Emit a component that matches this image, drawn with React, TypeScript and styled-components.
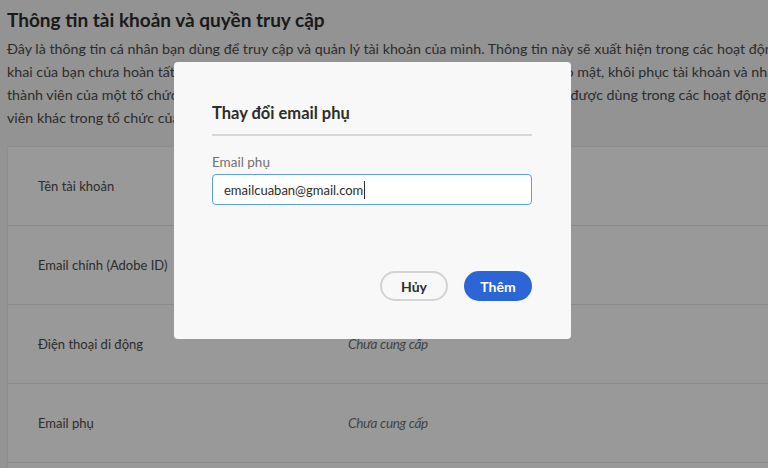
import React from "react";
import styled, { createGlobalStyle } from "styled-components";

const GlobalStyle = createGlobalStyle`
  html, body {
    margin: 0;
    padding: 0;
    background: #f5f5f5;
    overflow: hidden;
    height: 100%;
  }
  body {
    font-family: Lato, "Noto Sans", sans-serif;
    color: #4b4b4b;
  }
  * { box-sizing: border-box; }
`;

const Page = styled.div`
  width: 1100px;
  padding: 6px 0 0 7px;
`;

const Heading = styled.h1`
  margin: 0;
  font-size: 19px;
  line-height: 28px;
  font-weight: 700;
  color: #2c2c2c;
`;

const Intro = styled.div`
  margin-top: 3px;
  font-size: 14.25px;
  line-height: 23px;
  color: #4b4b4b;
`;

const IntroLine = styled.div`
  white-space: nowrap;
`;

const Card = styled.div`
  margin-top: 17px;
  background: #ffffff;
  border: 1px solid #ececec;
  border-right: none;
`;

const Row = styled.div`
  display: grid;
  grid-template-columns: 310px 1fr;
  align-items: center;
  height: 79px;
  padding-left: 30px;
  border-bottom: 1px solid #e6e6e6;
`;

const Label = styled.div`
  font-size: 13px;
  color: #4b4b4b;
`;

const Value = styled.div<{ $empty?: boolean }>`
  font-size: 13.5px;
  color: ${(p) => (p.$empty ? "#707070" : "#4b4b4b")};
  font-style: ${(p) => (p.$empty ? "italic" : "normal")};
  letter-spacing: ${(p) => (p.$empty ? "-0.3px" : "0")};
`;

const Overlay = styled.div`
  position: fixed;
  inset: 0;
  background: rgba(0, 0, 0, 0.4);
  display: flex;
  align-items: flex-start;
  padding: 62px 0 0 174px;
`;

const Dialog = styled.div`
  width: 397px;
  height: 277px;
  background: #f8f8f8;
  border-radius: 4px;
  padding: 40px 39px 38px 38px;
  display: flex;
  flex-direction: column;
`;

const DialogTitle = styled.h2`
  margin: 0;
  font-size: 16.5px;
  line-height: 22px;
  font-weight: 700;
  color: #2c2c2c;
  padding-bottom: 10px;
  border-bottom: 2px solid #d7d7d7;
`;

const FieldLabel = styled.label`
  display: block;
  margin-top: 17px;
  font-size: 13.5px;
  line-height: 18px;
  color: #707070;
`;

const InputBox = styled.div`
  margin-top: 3px;
  height: 31px;
  border: 1px solid #5d9ef3;
  border-radius: 4px;
  background: #ffffff;
  display: flex;
  align-items: center;
  padding-left: 11px;
  font-size: 13px;
  color: #2c2c2c;
`;

const Caret = styled.span`
  display: inline-block;
  width: 1px;
  height: 18px;
  background: #2c2c2c;
  margin-left: 1px;
`;

const Actions = styled.div`
  margin-top: auto;
  display: flex;
  justify-content: flex-end;
  gap: 16px;
`;

const Button = styled.button<{ $primary?: boolean }>`
  height: 30px;
  min-width: 68px;
  padding: 0 14px;
  border-radius: 16px;
  font-family: inherit;
  font-size: 14px;
  font-weight: 700;
  cursor: pointer;
  border: 2px solid ${(p) => (p.$primary ? "#2c65d6" : "#d3d3d3")};
  background: ${(p) => (p.$primary ? "#2c65d6" : "transparent")};
  color: ${(p) => (p.$primary ? "#ffffff" : "#2c2c2c")};
`;

const rows = [
  { label: "Tên tài khoản", value: "", empty: false },
  { label: "Email chính (Adobe ID)", value: "", empty: false },
  { label: "Điện thoại di động", value: "Chưa cung cấp", empty: true },
  { label: "Email phụ", value: "Chưa cung cấp", empty: true },
  { label: "Ngày sinh", value: "Chưa cung cấp", empty: true },
];

export default function App() {
  return (
    <>
      <GlobalStyle />
      <Page>
        <Heading>Thông tin tài khoản và quyền truy cập</Heading>
        <Intro>
          <IntroLine>
            Đây là thông tin cá nhân bạn dùng để truy cập và quản lý tài khoản của mình. Thông tin này sẽ xuất hiện trong các hoạt động công
          </IntroLine>
          <IntroLine>
            khai của bạn chưa hoàn tất. Chúng tôi sẽ dùng thông tin liên hệ của bạn để tăng cường bảo mật, khôi phục tài khoản và nhận thông báo.
          </IntroLine>
          <IntroLine>
            thành viên của một tổ chức, thông tin tài khoản và hồ sơ công khai của bạn cũng có thể sẽ được dùng trong các hoạt động cùng các thành
          </IntroLine>
          <IntroLine>viên khác trong tổ chức của bạn.</IntroLine>
        </Intro>
        <Card>
          {rows.map((r) => (
            <Row key={r.label}>
              <Label>{r.label}</Label>
              <Value $empty={r.empty}>{r.value}</Value>
            </Row>
          ))}
        </Card>
      </Page>
      <Overlay>
        <Dialog role="dialog" aria-labelledby="dlg-title">
          <DialogTitle id="dlg-title">Thay đổi email phụ</DialogTitle>
          <FieldLabel>Email phụ</FieldLabel>
          <InputBox>
            emailcuaban@gmail.com
            <Caret />
          </InputBox>
          <Actions>
            <Button>Hủy</Button>
            <Button $primary>Thêm</Button>
          </Actions>
        </Dialog>
      </Overlay>
    </>
  );
}
